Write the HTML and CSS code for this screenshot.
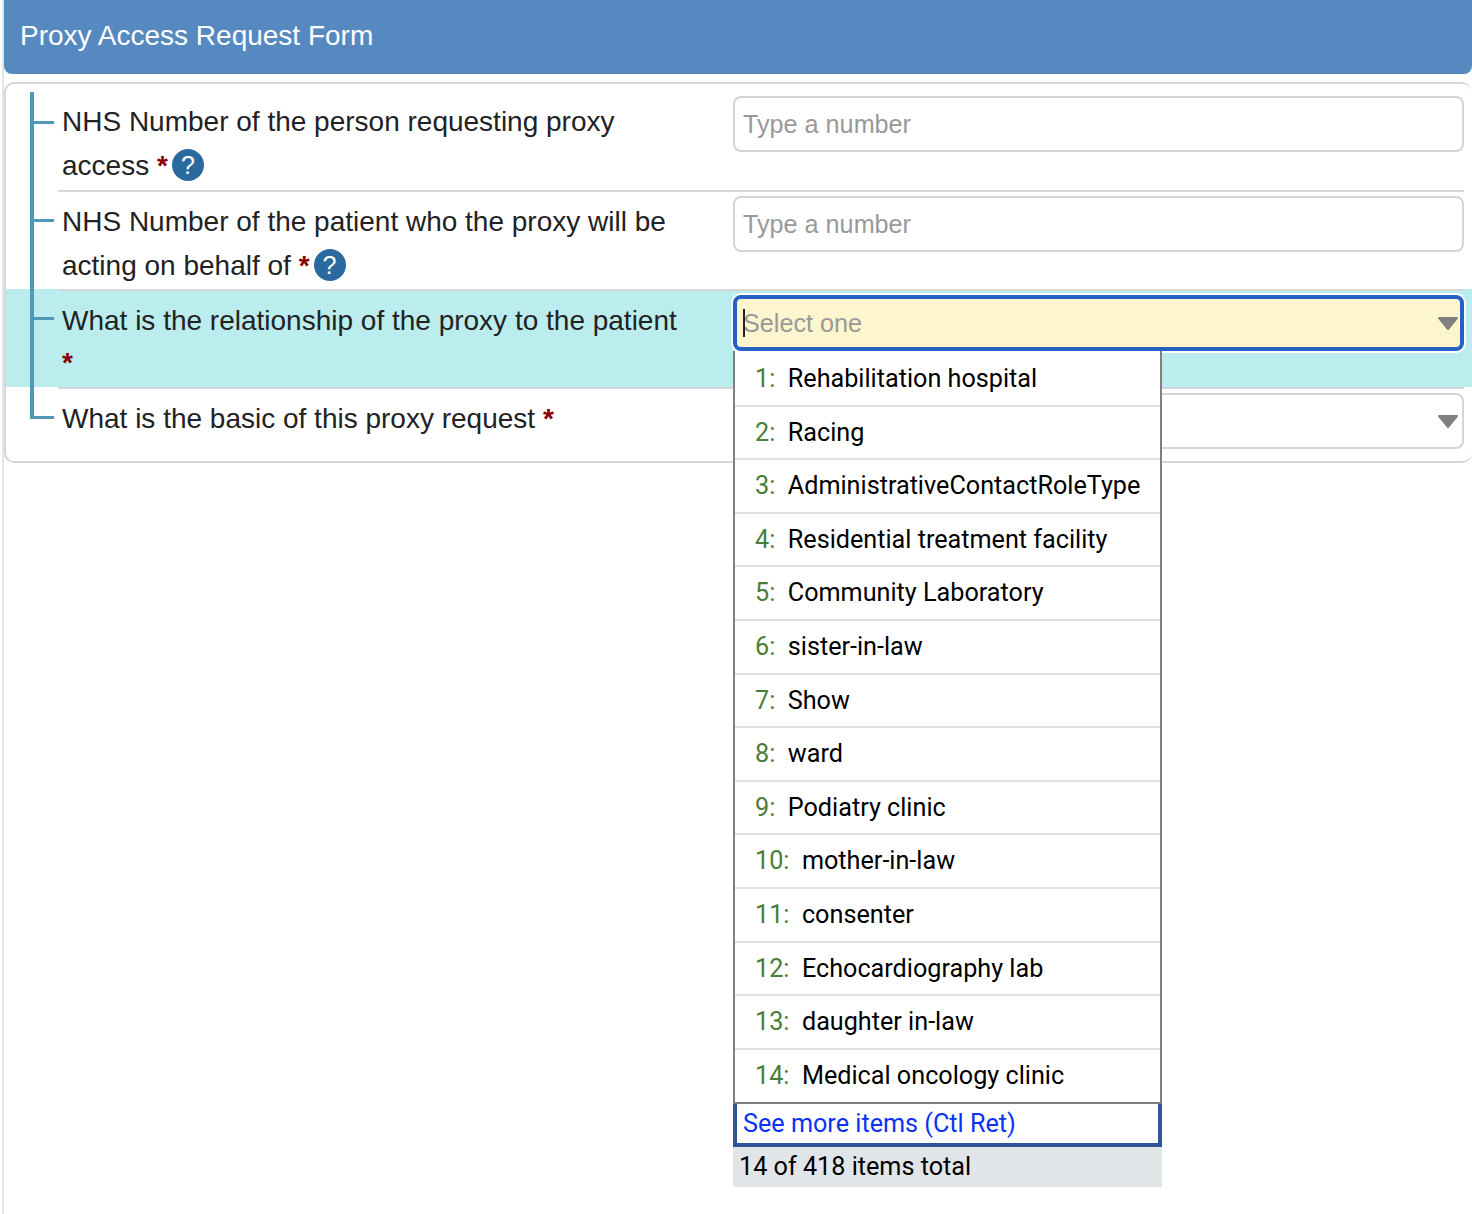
FILE: index.html
```html
<!DOCTYPE html>
<html lang="en">
<head>
    <meta charset="UTF-8">
    <meta name="viewport" content="width=device-width, initial-scale=1.0">
    <title>Proxy Access Request Form</title>
    <link rel="stylesheet" href="styles.css">
</head>
<body>
    <div class="page">
        <h1 class="form-title">Proxy Access Request Form</h1>
        <div class="panel">
            <div class="row">
                <div class="row-inner">
                    <label class="question">NHS Number of the person requesting proxy access <span class="req">*</span><span class="help">?</span></label>
                    <div class="control"><input class="field" type="text" placeholder="Type a number"></div>
                </div>
            </div>
            <div class="row">
                <div class="row-inner">
                    <label class="question">NHS Number of the patient who the proxy will be acting on behalf of <span class="req">*</span><span class="help">?</span></label>
                    <div class="control"><input class="field" type="text" placeholder="Type a number"></div>
                </div>
            </div>
            <div class="row active">
                <div class="row-inner">
                    <label class="question">What is the relationship of the proxy to the patient <span class="req">*</span></label>
                    <div class="control">
                        <input class="field focused" type="text" placeholder="Select one">
                        <span class="caret"></span>
                        <svg class="arrow" viewBox="0 0 22 15"><path d="M2 2H20L11 13Z"/></svg>
                        <div class="dropdown">
                            <ul class="items">
                                <li><span class="num">1:</span>Rehabilitation hospital</li>
                                <li><span class="num">2:</span>Racing</li>
                                <li><span class="num">3:</span>AdministrativeContactRoleType</li>
                                <li><span class="num">4:</span>Residential treatment facility</li>
                                <li><span class="num">5:</span>Community Laboratory</li>
                                <li><span class="num">6:</span>sister-in-law</li>
                                <li><span class="num">7:</span>Show</li>
                                <li><span class="num">8:</span>ward</li>
                                <li><span class="num">9:</span>Podiatry clinic</li>
                                <li><span class="num">10:</span>mother-in-law</li>
                                <li><span class="num">11:</span>consenter</li>
                                <li><span class="num">12:</span>Echocardiography lab</li>
                                <li><span class="num">13:</span>daughter in-law</li>
                                <li><span class="num">14:</span>Medical oncology clinic</li>
                            </ul>
                            <a class="more" href="#">See more items (Ctl Ret)</a>
                            <div class="total">14 of 418 items total</div>
                        </div>
                    </div>
                </div>
            </div>
            <div class="row last">
                <div class="row-inner">
                    <label class="question">What is the basic of this proxy request <span class="req">*</span></label>
                    <div class="control">
                        <input class="field" type="text">
                        <svg class="arrow" viewBox="0 0 22 15"><path d="M2 2H20L11 13Z"/></svg>
                    </div>
                </div>
            </div>
        </div>
    </div>
</body>
</html>
```

FILE: styles.css
```css
html, body {
    margin: 0;
    height: 100%;
    overflow: hidden;
}
body {
    font-family: "Liberation Sans", Arial, sans-serif;
    font-size: 28px;
    background: white;
    color: #222;
}
.page {
    margin-left: 2px;
    border-left: 2px solid #e3e5e7;
    height: 100%;
}
.form-title {
    margin: 0;
    height: 74px;
    line-height: 71px;
    padding-left: 16px;
    font-size: 28px;
    font-weight: normal;
    color: white;
    background: #5689c0;
    border-radius: 0 0 8px 8px;
}
.panel {
    margin-top: 8px;
    padding: 8px 0 22px;
    border: 2px solid #d4d7da;
    border-right: none;
    border-radius: 10px;
}
.row {
    position: relative;
    padding: 0 8px 0 52px;
}
.row-inner {
    display: flex;
    height: 96.4px;
    border-top: 2px solid #d4d7da;
}
.row:first-child .row-inner {
    border-top-color: transparent;
}
.row:first-child .question {
    padding-top: 6px;
}
.row:first-child .control {
    padding-top: 2px;
}
.row.active .question {
    padding-top: 9px;
    line-height: 42.5px;
}
.row.last .row-inner {
    height: 50px;
}
.row.active {
    background: #bbecee;
}
/* tree lines on the left */
.row::before {
    content: "";
    position: absolute;
    left: 24px;
    top: 0;
    bottom: 0;
    width: 4px;
    background: #4f99b5;
}
.row::after {
    content: "";
    position: absolute;
    left: 28px;
    top: 28.5px;
    width: 20px;
    height: 3px;
    background: #4f99b5;
}
.row.last::before {
    bottom: auto;
    height: 32px;
}
.question {
    box-sizing: border-box;
    width: 675px;
    flex: none;
    padding: 8px 48px 0 4px;
    line-height: 44px;
}
.req {
    color: #8b0000;
    font-weight: bold;
}
.help {
    display: inline-block;
    width: 32px;
    height: 32px;
    margin-left: 4px;
    border-radius: 50%;
    background: #2a6a9e;
    color: white;
    font-size: 25px;
    line-height: 32px;
    text-align: center;
    vertical-align: 1px;
}
.control {
    position: relative;
    flex: 1;
    padding-top: 4px;
}
.field {
    display: block;
    box-sizing: border-box;
    width: 100%;
    height: 56px;
    padding: 0 9px 0 8px;
    border: 2px solid #d1d5d9;
    border-radius: 8px;
    outline: none;
    font: 25.2px "Liberation Sans", Arial, sans-serif;
}
.field::placeholder {
    color: #999;
}
.field.focused {
    padding: 2px 7px 0 6px;
    border: 4px solid #2560c4;
    background: #fdf5cd;
    box-shadow: 0 0 0 2px white;
}
.caret {
    position: absolute;
    left: 10px;
    top: 18px;
    width: 2px;
    height: 28px;
    background: #222;
}
.arrow {
    position: absolute;
    right: 5px;
    top: 25px;
    width: 22px;
    height: 15px;
    fill: #808080;
    stroke: #808080;
    stroke-width: 2px;
    stroke-linejoin: round;
}
.dropdown {
    position: absolute;
    left: 0;
    top: 60.2px;
    width: 429px;
    z-index: 5;
    background: white;
}
.items {
    list-style-type: none;
    margin: 0;
    padding: 2px 0 0;
    border-left: 2px solid #808080;
    border-right: 2px solid #808080;
    border-bottom: 2px solid #808080;
}
.items li {
    box-sizing: border-box;
    height: 53.6px;
    padding-left: 20px;
    border-bottom: 2px solid #e0e0e0;
    font-family: Roboto, sans-serif;
    font-size: 25.2px;
    line-height: 52px;
    color: #000;
}
.items li:last-child {
    height: 52.5px;
    border-bottom: none;
}
.num {
    margin-right: 12.5px;
    color: #4a7d35;
}
.more {
    display: block;
    box-sizing: border-box;
    height: 42.7px;
    padding-left: 6px;
    border: 4px solid #2f5597;
    border-top: none;
    font-family: Roboto, sans-serif;
    font-size: 25.2px;
    line-height: 39px;
    color: #0a32f0;
    text-decoration: none;
}
.total {
    height: 40px;
    padding-left: 6px;
    background: #e2e5e8;
    font-family: Roboto, sans-serif;
    font-size: 25.2px;
    line-height: 39px;
    color: #000;
}
```
